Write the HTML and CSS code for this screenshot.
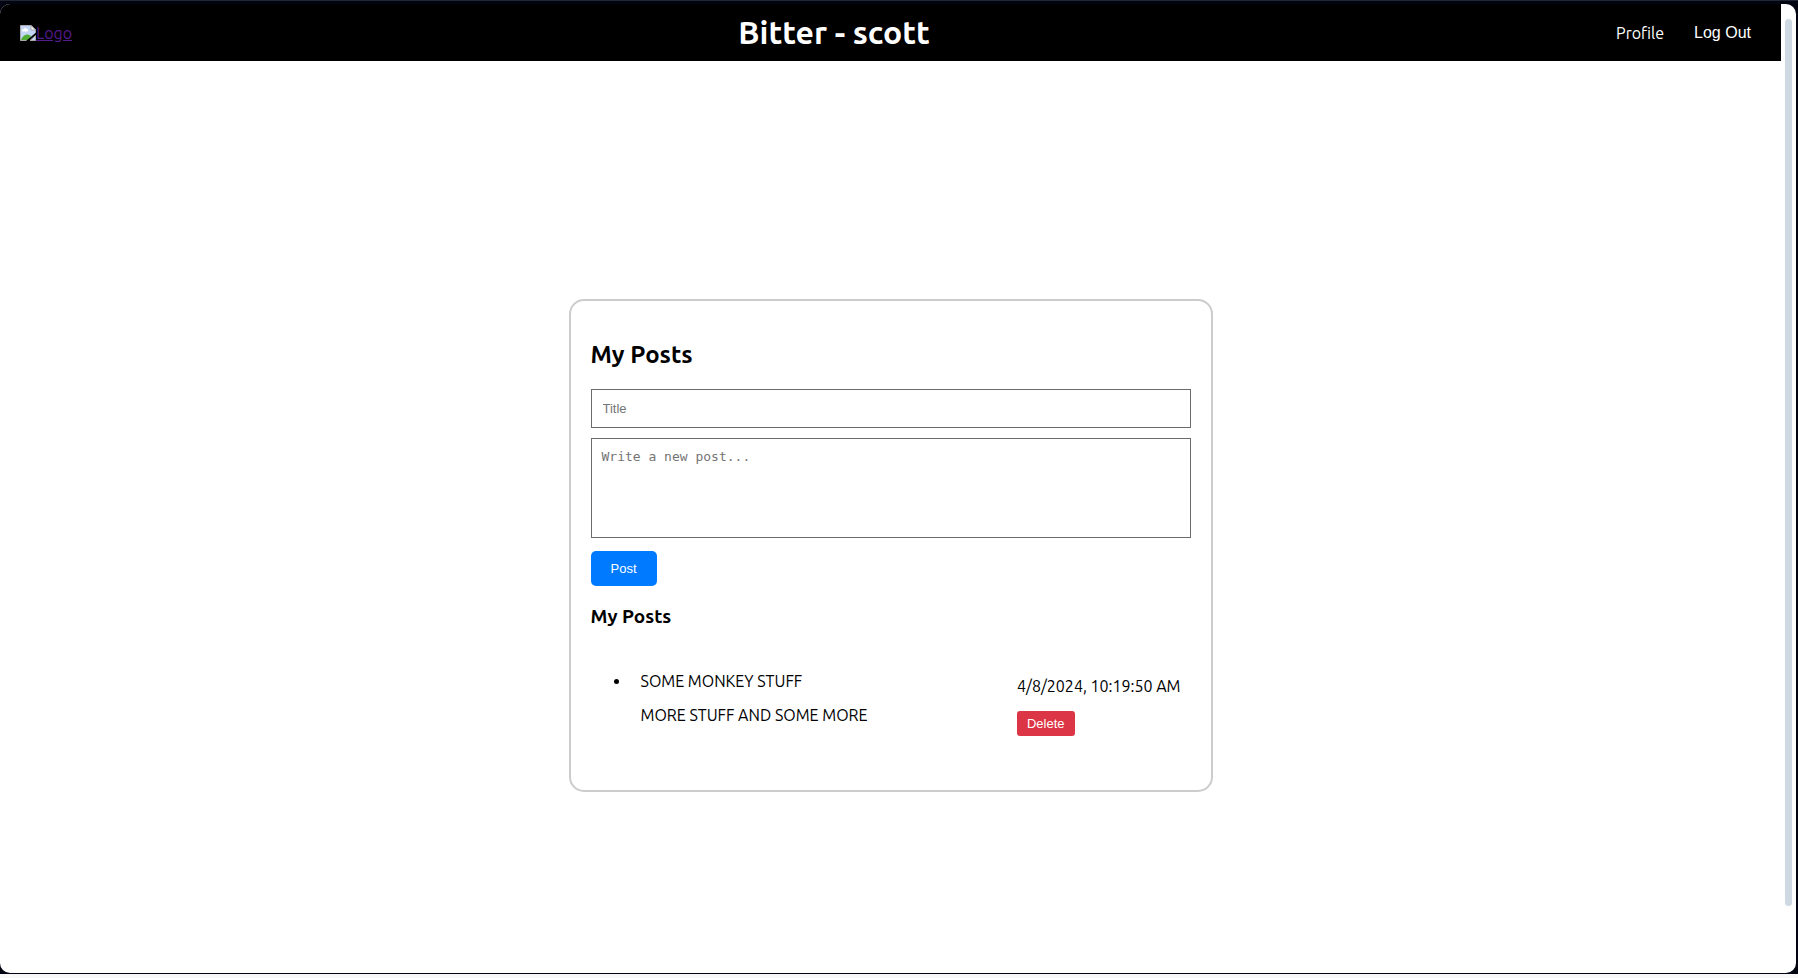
FILE: index.html
```html
<!DOCTYPE html>
<html lang="en">
<head>
<meta charset="utf-8">
<title>Bitter</title>
<link rel="stylesheet" href="styles.css">
</head>
<body>
<div class="window">
  <div class="page">
    <header class="navbar">
      <a class="logo" href="#"><svg class="logo-icon" width="16" height="16" viewBox="0 0 16 16" aria-hidden="true">
        <path d="M.5 .5H11L15.500 5V8.500L8.500 15.500H.5Z" fill="#c4d6f5" stroke="#a9a9a9"/>
        <path d="M2 5.500a1.500 1.500 0 0 1 1.500-1.500a2 2 0 0 1 3.500 0a1.200 1.200 0 0 1 0 2.500H3Q2 6.500 2 5.500Z" fill="#fff"/>
        <path d="M1 15Q3 9.500 7.500 9.500Q9.500 9.500 11 11L8.500 15Z" fill="#52ad35"/>
        <path d="M11 .5V5h4.500Z" fill="#fff" stroke="#a9a9a9"/>
        <path d="M6 16L16 7.500V10L9 16Z" fill="#000"/>
        <path d="M10 15.500L15.500 10.500V15.500Z" fill="#c4d6f5" stroke="#a9a9a9"/>
      </svg><span>Logo</span></a>
      <h1 class="brand">Bitter - scott</h1>
      <nav class="links">
        <a class="link" href="#">Profile</a>
        <button class="logout" type="button">Log Out</button>
      </nav>
    </header>
    <main class="content">
      <section class="card">
        <h2 class="card-title">My Posts</h2>
        <form class="form">
          <input class="field" type="text" placeholder="Title" aria-label="Title">
          <textarea class="field area" placeholder="Write a new post..." aria-label="Post"></textarea>
          <button class="post" type="button">Post</button>
        </form>
        <h3 class="list-title">My Posts</h3>
        <ul class="posts">
          <li class="item">
            <div class="row">
              <div class="text">
                <p class="line">SOME MONKEY STUFF</p>
                <p class="line">MORE STUFF AND SOME MORE</p>
              </div>
              <div class="meta">
                <time class="time">4/8/2024, 10:19:50 AM</time>
                <button class="delete" type="button">Delete</button>
              </div>
            </div>
          </li>
        </ul>
      </section>
    </main>
  </div>
  <div class="track"><div class="thumb"></div></div>
</div>
</body>
</html>
```
FILE: styles.css
```css
* { box-sizing: border-box; }

body {
  margin: 0;
  height: 100vh;
  display: flex;
  padding: 3px 2px 1px 0;
  border-top: 1px solid #1e2733;
  border-bottom: 4px solid #f8f8f8;
  background: #020412;
  color: #000;
  font-family: Ubuntu, "Noto Sans CJK SC", sans-serif;
  font-size: 16px;
  line-height: 18px;
}

.window {
  flex: 1;
  display: flex;
  overflow: hidden;
  border-radius: 10px;
  background: #fff;
}

.page {
  flex: 1;
  display: flex;
  flex-direction: column;
}

.navbar {
  display: flex;
  justify-content: space-between;
  align-items: center;
  padding: 10px 20px;
  background: #000;
  color: #fff;
}

.logo {
  display: flex;
  align-items: center;
  color: #551a8b;
}

.brand {
  margin: 0;
  font-size: 32px;
  line-height: 37px;
}

.links {
  display: flex;
  align-items: center;
  gap: 20px;
  padding: 0 0 0 20px;
}

.link {
  color: #fff;
  text-decoration: none;
}

.logout {
  padding: 8px 10px;
  border: 0;
  background: none;
  color: #fff;
  font: 16px/18px "Liberation Sans", Arial, sans-serif;
}

.content {
  flex: 1;
  display: flex;
  justify-content: center;
  align-items: center;
  padding-top: 57px;
}

.card {
  width: 644px;
  max-width: 100%;
  padding: 20px;
  border: 2px solid #ccc;
  border-radius: 15px;
}

.card-title {
  margin: 20px 0;
  font-size: 24px;
  line-height: 28px;
}

.form {
  display: flex;
  flex-direction: column;
  align-items: flex-start;
}

.field {
  display: block;
  width: 100%;
  height: 39px;
  margin: 0 0 10px;
  padding: 10px 11px;
  border: 1px solid #6b6b6b;
  border-radius: 0;
  background: #fff;
  font: 13px/17px "Liberation Sans", Arial, sans-serif;
}

.field::placeholder { color: #757575; }

.area {
  height: 100px;
  margin-bottom: 13px;
  padding: 10px;
  resize: none;
  font: 13px/16px "DejaVu Sans Mono", monospace;
}

.post, .delete {
  border: 0;
  color: #fff;
  font: 13px/15px "Liberation Sans", Arial, sans-serif;
}

.post {
  padding: 10px 20px;
  border-radius: 5px;
  background: #007bff;
}

.list-title {
  margin: 19px 0 20px;
  font-size: 19px;
  line-height: 22px;
}

.posts {
  margin: 0;
  padding: 15px 10px 20px 40px;
}

.item { padding: 10px 0 10px 10px; }

.row {
  display: flex;
  justify-content: space-between;
}

.line { margin: 0 0 16px; }

.meta {
  display: flex;
  flex-direction: column;
  align-items: flex-start;
  gap: 16px;
  padding-top: 5px;
}

.delete {
  padding: 5px 10px;
  border-radius: 3px;
  background: #dc3545;
}

.track {
  width: 15px;
  padding: 15px 4px 0;
}

.thumb {
  width: 7px;
  height: 93%;
  border-radius: 4px;
  background: #cfd9e3;
}
```
